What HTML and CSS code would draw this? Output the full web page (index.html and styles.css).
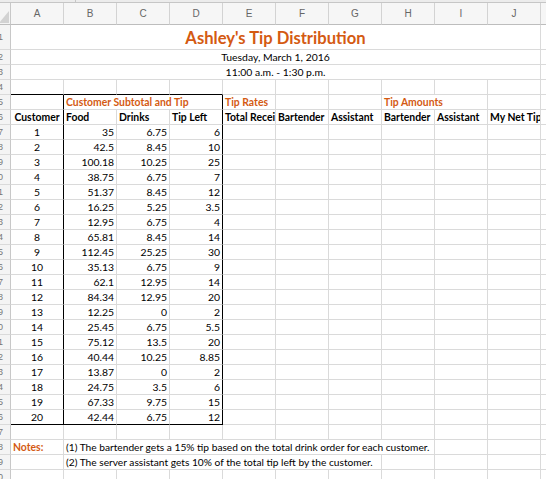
FILE: index.html
```html
<!DOCTYPE html>
<html>
<head>
<meta charset="utf-8">
<link rel="stylesheet" href="styles.css">
</head>
<body>
<div class="topbar"><div class="topseg"></div></div>
<div class="sheet">
  <div class="corner"><span class="tri"></span></div>
  <div class="ch">A</div><div class="ch">B</div><div class="ch">C</div><div class="ch">D</div><div class="ch">E</div><div class="ch">F</div><div class="ch">G</div><div class="ch">H</div><div class="ch">I</div><div class="ch">J</div><div class="ch">K</div>

  <div class="rh"><span>1</span></div><div class="c m title span10">Ashley's Tip Distribution</div><div class="c"></div>
  <div class="rh"><span>2</span></div><div class="c m span10">Tuesday, March 1, 2016</div><div class="c"></div>
  <div class="rh"><span>3</span></div><div class="c m span10">11:00 a.m. - 1:30 p.m.</div><div class="c"></div>
  <div class="rh"><span>4</span></div><div class="c bb"></div><div class="c bb"></div><div class="c bb"></div><div class="c bb"></div><div class="c"></div><div class="c"></div><div class="c"></div><div class="c"></div><div class="c"></div><div class="c"></div><div class="c"></div>
  <div class="rh"><span>5</span></div><div class="c br"></div><div class="c o span3 br">Customer Subtotal and Tip</div><div class="c o">Tip Rates</div><div class="c"></div><div class="c"></div><div class="c o span2">Tip Amounts</div><div class="c"></div><div class="c"></div>
  <div class="rh"><span>6</span></div><div class="c b m br">Customer</div><div class="c b">Food</div><div class="c b">Drinks</div><div class="c b br">Tip Left</div><div class="c b">Total Recei</div><div class="c b">Bartender</div><div class="c b">Assistant</div><div class="c b">Bartender</div><div class="c b">Assistant</div><div class="c b">My Net Tip</div><div class="c"></div>
  <div class="rh"><span>7</span></div><div class="c m br">1</div><div class="c r">35</div><div class="c r">6.75</div><div class="c r br">6</div><div class="c"></div><div class="c"></div><div class="c"></div><div class="c"></div><div class="c"></div><div class="c"></div><div class="c"></div>
  <div class="rh"><span>8</span></div><div class="c m br">2</div><div class="c r">42.5</div><div class="c r">8.45</div><div class="c r br">10</div><div class="c"></div><div class="c"></div><div class="c"></div><div class="c"></div><div class="c"></div><div class="c"></div><div class="c"></div>
  <div class="rh"><span>9</span></div><div class="c m br">3</div><div class="c r">100.18</div><div class="c r">10.25</div><div class="c r br">25</div><div class="c"></div><div class="c"></div><div class="c"></div><div class="c"></div><div class="c"></div><div class="c"></div><div class="c"></div>
  <div class="rh"><span>10</span></div><div class="c m br">4</div><div class="c r">38.75</div><div class="c r">6.75</div><div class="c r br">7</div><div class="c"></div><div class="c"></div><div class="c"></div><div class="c"></div><div class="c"></div><div class="c"></div><div class="c"></div>
  <div class="rh"><span>11</span></div><div class="c m br">5</div><div class="c r">51.37</div><div class="c r">8.45</div><div class="c r br">12</div><div class="c"></div><div class="c"></div><div class="c"></div><div class="c"></div><div class="c"></div><div class="c"></div><div class="c"></div>
  <div class="rh"><span>12</span></div><div class="c m br">6</div><div class="c r">16.25</div><div class="c r">5.25</div><div class="c r br">3.5</div><div class="c"></div><div class="c"></div><div class="c"></div><div class="c"></div><div class="c"></div><div class="c"></div><div class="c"></div>
  <div class="rh"><span>13</span></div><div class="c m br">7</div><div class="c r">12.95</div><div class="c r">6.75</div><div class="c r br">4</div><div class="c"></div><div class="c"></div><div class="c"></div><div class="c"></div><div class="c"></div><div class="c"></div><div class="c"></div>
  <div class="rh"><span>14</span></div><div class="c m br">8</div><div class="c r">65.81</div><div class="c r">8.45</div><div class="c r br">14</div><div class="c"></div><div class="c"></div><div class="c"></div><div class="c"></div><div class="c"></div><div class="c"></div><div class="c"></div>
  <div class="rh"><span>15</span></div><div class="c m br">9</div><div class="c r">112.45</div><div class="c r">25.25</div><div class="c r br">30</div><div class="c"></div><div class="c"></div><div class="c"></div><div class="c"></div><div class="c"></div><div class="c"></div><div class="c"></div>
  <div class="rh"><span>16</span></div><div class="c m br">10</div><div class="c r">35.13</div><div class="c r">6.75</div><div class="c r br">9</div><div class="c"></div><div class="c"></div><div class="c"></div><div class="c"></div><div class="c"></div><div class="c"></div><div class="c"></div>
  <div class="rh"><span>17</span></div><div class="c m br">11</div><div class="c r">62.1</div><div class="c r">12.95</div><div class="c r br">14</div><div class="c"></div><div class="c"></div><div class="c"></div><div class="c"></div><div class="c"></div><div class="c"></div><div class="c"></div>
  <div class="rh"><span>18</span></div><div class="c m br">12</div><div class="c r">84.34</div><div class="c r">12.95</div><div class="c r br">20</div><div class="c"></div><div class="c"></div><div class="c"></div><div class="c"></div><div class="c"></div><div class="c"></div><div class="c"></div>
  <div class="rh"><span>19</span></div><div class="c m br">13</div><div class="c r">12.25</div><div class="c r">0</div><div class="c r br">2</div><div class="c"></div><div class="c"></div><div class="c"></div><div class="c"></div><div class="c"></div><div class="c"></div><div class="c"></div>
  <div class="rh"><span>20</span></div><div class="c m br">14</div><div class="c r">25.45</div><div class="c r">6.75</div><div class="c r br">5.5</div><div class="c"></div><div class="c"></div><div class="c"></div><div class="c"></div><div class="c"></div><div class="c"></div><div class="c"></div>
  <div class="rh"><span>21</span></div><div class="c m br">15</div><div class="c r">75.12</div><div class="c r">13.5</div><div class="c r br">20</div><div class="c"></div><div class="c"></div><div class="c"></div><div class="c"></div><div class="c"></div><div class="c"></div><div class="c"></div>
  <div class="rh"><span>22</span></div><div class="c m br">16</div><div class="c r">40.44</div><div class="c r">10.25</div><div class="c r br">8.85</div><div class="c"></div><div class="c"></div><div class="c"></div><div class="c"></div><div class="c"></div><div class="c"></div><div class="c"></div>
  <div class="rh"><span>23</span></div><div class="c m br">17</div><div class="c r">13.87</div><div class="c r">0</div><div class="c r br">2</div><div class="c"></div><div class="c"></div><div class="c"></div><div class="c"></div><div class="c"></div><div class="c"></div><div class="c"></div>
  <div class="rh"><span>24</span></div><div class="c m br">18</div><div class="c r">24.75</div><div class="c r">3.5</div><div class="c r br">6</div><div class="c"></div><div class="c"></div><div class="c"></div><div class="c"></div><div class="c"></div><div class="c"></div><div class="c"></div>
  <div class="rh"><span>25</span></div><div class="c m br">19</div><div class="c r">67.33</div><div class="c r">9.75</div><div class="c r br">15</div><div class="c"></div><div class="c"></div><div class="c"></div><div class="c"></div><div class="c"></div><div class="c"></div><div class="c"></div>
  <div class="rh"><span>26</span></div><div class="c m br bb">20</div><div class="c r bb">42.44</div><div class="c r bb">6.75</div><div class="c r br bb">12</div><div class="c"></div><div class="c"></div><div class="c"></div><div class="c"></div><div class="c"></div><div class="c"></div><div class="c"></div>
  <div class="rh"><span>27</span></div><div class="c"></div><div class="c"></div><div class="c"></div><div class="c"></div><div class="c"></div><div class="c"></div><div class="c"></div><div class="c"></div><div class="c"></div><div class="c"></div><div class="c"></div>
  <div class="rh"><span>28</span></div><div class="c o">Notes:</div><div class="c note span7">(1) The bartender gets a 15% tip based on the total drink order for each customer.</div><div class="c"></div><div class="c"></div><div class="c"></div>
  <div class="rh"><span>29</span></div><div class="c"></div><div class="c note span6">(2) The server assistant gets 10% of the total tip left by the customer.</div><div class="c"></div><div class="c"></div><div class="c"></div><div class="c"></div>
  <div class="rh"><span>30</span></div><div class="c"></div><div class="c"></div><div class="c"></div><div class="c"></div><div class="c"></div><div class="c"></div><div class="c"></div><div class="c"></div><div class="c"></div><div class="c"></div><div class="c"></div>
</div>
</body>
</html>
```
FILE: styles.css
```css
html, body {
  margin: 0;
  padding: 0;
  overflow: hidden;
  background: #ffffff;
}
body {
  width: 546px;
  height: 479px;
  font-family: Lato, "Open Sans", sans-serif;
}
.topbar {
  height: 2px;
  background: #ececec;
  border-bottom: 1px solid #c6c6c6;
}
.topseg {
  width: 75px;
  height: 2px;
  border-right: 1px solid #c6c6c6;
}
.sheet {
  display: grid;
  grid-template-columns: 11px repeat(11, 53px);
  grid-template-rows: 22px 25px repeat(29, 15px);
  width: 546px;
  overflow: hidden;
}
.corner {
  background: #f4f4f4;
  border-right: 1px solid #c8c8c8;
  border-bottom: 1px solid #bdbdbd;
  box-sizing: border-box;
  display: flex;
  align-items: flex-end;
  justify-content: flex-end;
  padding: 0 1px 1px 0;
}
.tri {
  width: 0;
  height: 0;
  border-left: 10px solid transparent;
  border-bottom: 12px solid #d2d2d2;
}
.ch {
  background: #f6f6f6;
  border-right: 1px solid #d3d3d3;
  border-bottom: 1px solid #bdbdbd;
  box-sizing: border-box;
  display: flex;
  align-items: center;
  justify-content: center;
  font-family: "Liberation Sans", sans-serif;
  font-size: 10px;
  color: #666666;
  overflow: hidden;
}
.rh {
  background: #f4f4f4;
  border-right: 1px solid #c8c8c8;
  border-bottom: 1px solid #dadada;
  box-sizing: border-box;
  display: flex;
  align-items: center;
  justify-content: flex-end;
  padding-right: 7px;
  overflow: hidden;
  font-family: "Liberation Sans", sans-serif;
  font-size: 9px;
  color: #777777;
}
.c {
  border-right: 1px solid #dadada;
  border-bottom: 1px solid #dadada;
  box-sizing: border-box;
  display: flex;
  align-items: flex-end;
  padding: 0 2px 1px 2px;
  font-size: 10.4px;
  line-height: 12px;
  color: #000000;
  white-space: nowrap;
  overflow: hidden;
  min-width: 0;
}
.note { font-size: 10.2px; }
.r { justify-content: flex-end; }
.m { justify-content: center; }
.b { font-weight: 700; }
.o { font-weight: 700; color: #d45a12; }
.title {
  font-size: 16.6px;
  font-weight: 700;
  line-height: 20px;
  color: #d45a12;
  padding-bottom: 1px;
}
.span10 { grid-column: span 10; }
.span7 { grid-column: span 7; }
.span6 { grid-column: span 6; }
.span3 { grid-column: span 3; }
.span2 { grid-column: span 2; }
.bb { border-bottom-color: #000000; }
.br { border-right-color: #000000; }
```
